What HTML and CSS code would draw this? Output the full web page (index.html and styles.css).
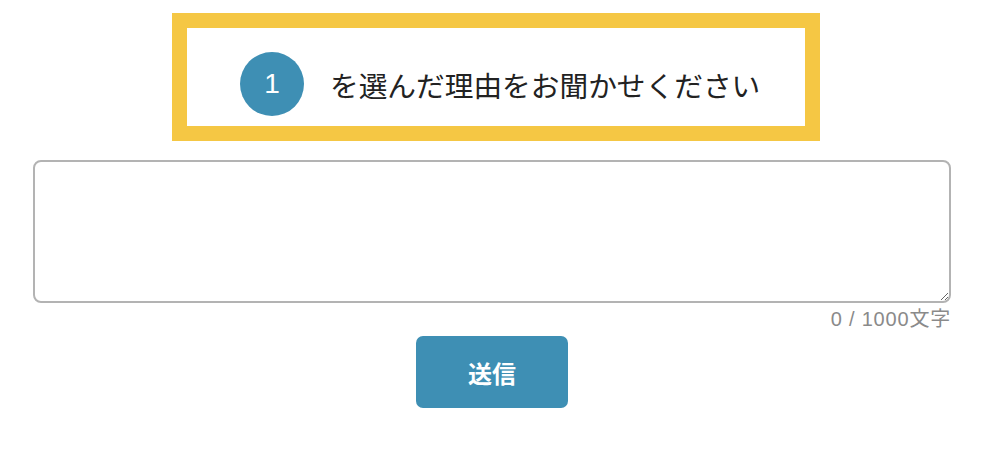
FILE: index.html
```html
<!DOCTYPE html>
<html lang="ja">
  <head>
    <meta charset="UTF-8" />
    <meta name="viewport" content="width=device-width, initial-scale=1.0" />
    <title>アンケート</title>
    <link rel="stylesheet" href="styles.css">
  </head>
  <body>
    <div class="form-container">
      <div class="question-box">
        <div class="question-inner">
          <span class="step-number">1</span>
          <span class="question-text">を選んだ理由をお聞かせください</span>
        </div>
      </div>
      <textarea class="answer" maxlength="1000"></textarea>
      <div class="counter">0 / 1000文字</div>
      <div class="actions">
        <button class="submit-button">送信</button>
      </div>
    </div>
  </body>
</html>
```

FILE: styles.css
```css
body {
  font-family: "Liberation Sans", "Noto Sans CJK JP", sans-serif;
  margin: 0;
  padding: 0;
  background: white;
  color: #222;
}
.form-container {
  width: 918px;
  padding: 13px 0 0 33px;
}
.question-box {
  width: 618px;
  margin-left: 139px;
  border: 15px solid #f5c744;
}
.question-inner {
  box-sizing: border-box;
  height: 98px;
  display: flex;
  align-items: center;
  padding: 14px 0 0 53px;
}
.step-number {
  width: 64px;
  height: 64px;
  border-radius: 50%;
  background: #3e8fb4;
  color: white;
  font-size: 28px;
  display: flex;
  align-items: center;
  justify-content: center;
}
.question-text {
  margin-left: 26px;
  font-family: "Noto Sans CJK JP", sans-serif;
  font-size: 28.7px;
  color: #222;
}
.answer {
  display: block;
  box-sizing: border-box;
  width: 918px;
  height: 143px;
  margin-top: 19px;
  border: 2px solid #b3b3b3;
  border-radius: 8px;
  padding: 10px;
  font-family: inherit;
  font-size: 16px;
  outline: none;
}
.counter {
  text-align: right;
  font-size: 20px;
  letter-spacing: 0.8px;
  color: #8a8a8a;
  margin-top: 4px;
  line-height: 24px;
}
.actions {
  display: flex;
  justify-content: center;
  margin-top: 5px;
}
.submit-button {
  width: 152px;
  height: 72px;
  background: #3e8fb4;
  color: white;
  border: none;
  border-radius: 7px;
  font-family: "Noto Sans CJK JP", sans-serif;
  font-size: 24px;
  font-weight: bold;
  cursor: pointer;
}
```
